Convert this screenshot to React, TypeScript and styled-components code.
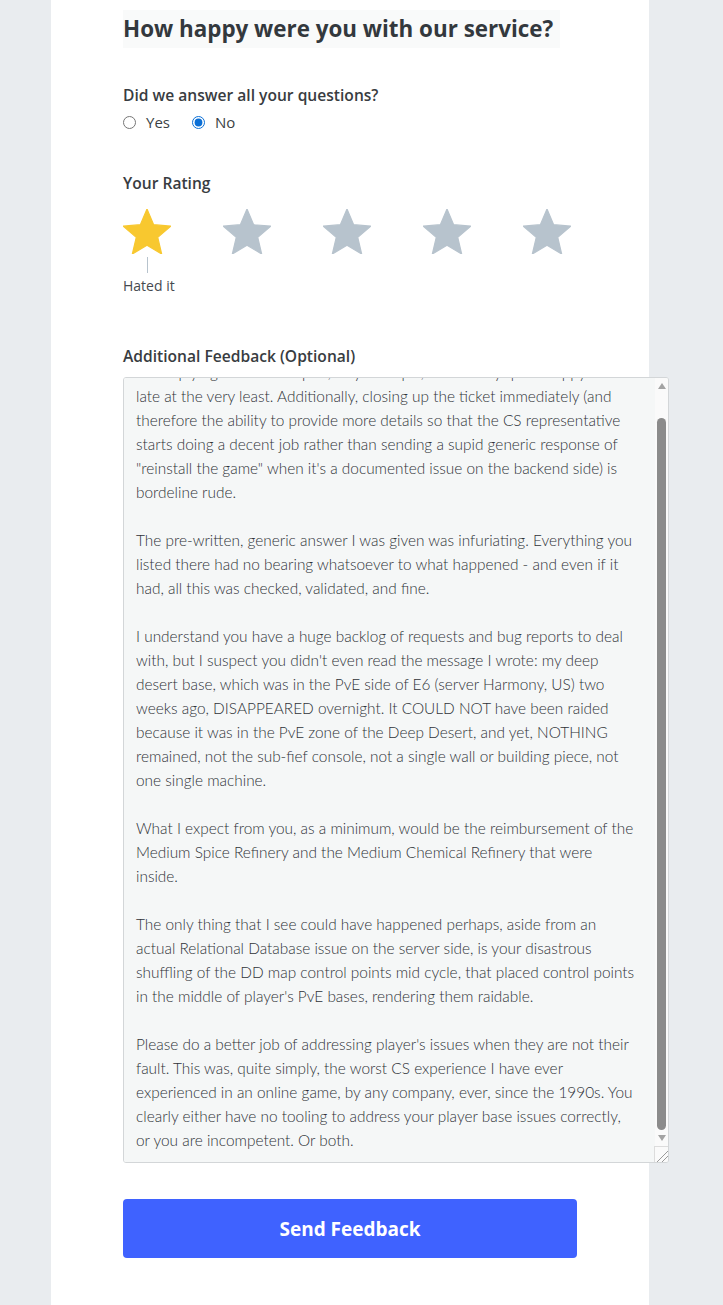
import React, { useEffect, useRef, useState } from 'react';
import styled, { createGlobalStyle } from 'styled-components';

/* ---- text of the feedback (already typed by the user) ---- */
const feedback = [
  'The reply I got was unhelpful, way off topic, and frankly quite sloppy and',
  'late at the very least. Additionally, closing up the ticket immediately (and',
  'therefore the ability to provide more details so that the CS representative',
  'starts doing a decent job rather than sending a supid generic response of',
  '"reinstall the game" when it\'s a documented issue on the backend side) is',
  'bordeline rude.',
  '',
  'The pre-written, generic answer I was given was infuriating. Everything you',
  'listed there had no bearing whatsoever to what happened - and even if it',
  'had, all this was checked, validated, and fine.',
  '',
  'I understand you have a huge backlog of requests and bug reports to deal',
  'with, but I suspect you didn\'t even read the message I wrote: my deep',
  'desert base, which was in the PvE side of E6 (server Harmony, US) two',
  'weeks ago, DISAPPEARED overnight. It COULD NOT have been raided',
  'because it was in the PvE zone of the Deep Desert, and yet, NOTHING',
  'remained, not the sub-fief console, not a single wall or building piece, not',
  'one single machine.',
  '',
  'What I expect from you, as a minimum, would be the reimbursement of the',
  'Medium Spice Refinery and the Medium Chemical Refinery that were',
  'inside.',
  '',
  'The only thing that I see could have happened perhaps, aside from an',
  'actual Relational Database issue on the server side, is your disastrous',
  'shuffling of the DD map control points mid cycle, that placed control points',
  'in the middle of player\'s PvE bases, rendering them raidable.',
  '',
  'Please do a better job of addressing player\'s issues when they are not their',
  'fault. This was, quite simply, the worst CS experience I have ever',
  'experienced in an online game, by any company, ever, since the 1990s. You',
  'clearly either have no tooling to address your player base issues correctly,',
  'or you are incompetent. Or both.',
].join('\n');

const ratingLabels = ['Hated it', 'Disliked it', 'It was OK', 'Liked it', 'Loved it'];

const GlobalStyle = createGlobalStyle`
  html, body { margin: 0; padding: 0; }
  body {
    background: #e9ecef;
    font-family: "Open Sans", "Noto Sans", sans-serif;
    color: #343a40;
  }
`;

/* ---- layout ---- */
const Page = styled.main`
  width: 598px;
  min-height: 1305px;
  margin-left: 51px;
  background: #fff;
  padding: 10px 72px 40px;
  box-sizing: border-box;
`;

const Title = styled.h2`
  width: 437px;
  margin: 0;
  background: #f9fafa;
  font-size: 22.4px;
  line-height: 38px;
  font-weight: 700;
  color: #33383d;
`;

const Label = styled.div<{ gap: number }>`
  margin-top: ${({ gap }) => gap}px;
  font-size: 15.6px;
  line-height: 20px;
  font-weight: 600;
  color: #383c41;
`;

const RadioRow = styled.div`
  display: flex;
  gap: 22px;
  margin-top: 7px;
  height: 20px;
  align-items: center;
`;

const RadioOption = styled.label`
  display: flex;
  align-items: center;
  gap: 10px;
  font-size: 15px;
  color: #3b3f44;
  cursor: pointer;
`;

const Radio = styled.input`
  margin: 0;
  width: 13px;
  height: 13px;
  accent-color: #0b6fd6;
`;

const Stars = styled.div`
  display: flex;
  gap: 52px;
  margin-top: 16px;
  height: 87px;
`;

const StarItem = styled.div`
  position: relative;
  display: flex;
  flex-direction: column;
  align-items: center;
  width: 48px;
`;

const StarButton = styled.button`
  border: 0;
  padding: 0;
  background: none;
  width: 48px;
  height: 45px;
  cursor: pointer;
  display: block;
  svg { display: block; }
`;

const Tick = styled.span`
  width: 1px;
  height: 16px;
  margin-top: 3px;
  background: #b7c3cd;
`;

const Caption = styled.span`
  position: absolute;
  left: 0;
  top: 67px;
  white-space: nowrap;
  font-size: 14px;
  line-height: 20px;
  color: #454a4f;
`;

/* ---- feedback box with its scrollbar ---- */
const FeedbackBox = styled.div`
  position: relative;
  margin-top: 11px;
  width: 546px;
`;

const Feedback = styled.textarea`
  display: block;
  width: 100%;
  height: 786px;
  box-sizing: border-box;
  padding: 8px 26px 10px 12px;
  border: 1px solid #d3d6d8;
  border-radius: 3px;
  background: #f5f7f7;
  color: #2f3337;
  font-family: Lato, "Open Sans", sans-serif;
  font-weight: 300;
  font-size: 15.4px;
  line-height: 24px;
  resize: vertical;
  outline: none;
  scrollbar-width: none;
  &::-webkit-scrollbar { display: none; }
`;

const ScrollBar = styled.div`
  position: absolute;
  top: 1px;
  right: 1px;
  bottom: 1px;
  width: 13px;
  display: flex;
  flex-direction: column;
  background: #fafafa;
  border-radius: 0 2px 2px 0;
  pointer-events: none;
`;

const Arrow = styled.div<{ dir: 'up' | 'down' }>`
  height: 16px;
  display: grid;
  place-items: center;
  &::before {
    content: '';
    width: 0;
    height: 0;
    border-left: 4px solid transparent;
    border-right: 4px solid transparent;
    ${({ dir }) =>
      dir === 'up' ? 'border-bottom: 6px solid #a3a3a3;' : 'border-top: 6px solid #a3a3a3;'}
  }
`;

const Track = styled.div`
  position: relative;
  flex: 1;
`;

const Thumb = styled.div`
  position: absolute;
  left: 2px;
  right: 2px;
  border-radius: 5px;
  background: #8b8b8b;
`;

const Corner = styled.div`
  height: 16px;
  box-sizing: border-box;
  border-top: 1px solid #dcdcdc;
  border-left: 1px solid #dcdcdc;
  margin-left: -1px;
  background: linear-gradient(
      135deg,
      transparent 58%,
      #9a9a9a 58%, #9a9a9a 63%,
      transparent 63%, transparent 76%,
      #9a9a9a 76%, #9a9a9a 81%,
      transparent 81%
    );
`;

const SendButton = styled.button`
  display: block;
  margin-top: 36px;
  width: 454px;
  height: 59px;
  border: 0;
  border-radius: 4px;
  background: #3f62ff;
  color: #fff;
  font-family: "Open Sans", sans-serif;
  font-size: 19px;
  font-weight: 700;
  cursor: pointer;
`;

/* ---- star icon ---- */
const StarIcon: React.FC<{ on: boolean }> = ({ on }) => {
  const c = on ? '#f8c82f' : '#b7c3cd';
  return (
    <svg width="48" height="45" viewBox="2 2 20 19" aria-hidden>
      <path
        d="M12 17.27L18.18 21l-1.64-7.03L22 9.24l-7.19-.61L12 2 9.19 8.63 2 9.24l5.46 4.73L5.82 21z"
        fill={c}
        stroke={c}
        strokeWidth="0.5"
        strokeLinejoin="round"
      />
    </svg>
  );
};

const TRACK = 736; // 786 box - borders - two arrows - resize corner

export default function App() {
  const [answered, setAnswered] = useState<'yes' | 'no'>('no');
  const [rating, setRating] = useState(1);
  const [text, setText] = useState(feedback);
  const [scroll, setScroll] = useState({ top: 0, max: 1, ratio: 1 });
  const ref = useRef<HTMLTextAreaElement>(null);

  const measure = () => {
    const ta = ref.current;
    if (!ta) return;
    const max = Math.max(1, ta.scrollHeight - ta.clientHeight);
    setScroll({ top: ta.scrollTop, max, ratio: Math.min(1, ta.clientHeight / ta.scrollHeight) });
  };

  // the user has typed to the end, so the box is scrolled down
  useEffect(() => {
    if (ref.current) ref.current.scrollTop = ref.current.scrollHeight;
    measure();
  }, []);

  const thumbH = Math.max(20, TRACK * scroll.ratio);
  const thumbTop = ((TRACK - thumbH) * scroll.top) / scroll.max;

  return (
    <>
      <GlobalStyle />
      <Page>
        <Title>How happy were you with our service?</Title>

        <Label gap={37}>Did we answer all your questions?</Label>
        <RadioRow>
          <RadioOption>
            <Radio type="radio" name="answered" checked={answered === 'yes'} onChange={() => setAnswered('yes')} />
            Yes
          </RadioOption>
          <RadioOption>
            <Radio type="radio" name="answered" checked={answered === 'no'} onChange={() => setAnswered('no')} />
            No
          </RadioOption>
        </RadioRow>

        <Label gap={41}>Your Rating</Label>
        <Stars>
          {ratingLabels.map((l, i) => (
            <StarItem key={l}>
              <StarButton type="button" aria-label={l} onClick={() => setRating(i + 1)}>
                <StarIcon on={i < rating} />
              </StarButton>
              {rating === i + 1 && (
                <>
                  <Tick />
                  <Caption>{l}</Caption>
                </>
              )}
            </StarItem>
          ))}
        </Stars>

        <Label gap={50}>Additional Feedback (Optional)</Label>
        <FeedbackBox>
          <Feedback
            ref={ref}
            value={text}
            onScroll={measure}
            onChange={(e) => {
              setText(e.target.value);
              measure();
            }}
          />
          <ScrollBar aria-hidden>
            <Arrow dir="up" />
            <Track>
              <Thumb style={{ top: thumbTop, height: thumbH }} />
            </Track>
            <Arrow dir="down" />
            <Corner />
          </ScrollBar>
        </FeedbackBox>

        <SendButton type="button">Send Feedback</SendButton>
      </Page>
    </>
  );
}
